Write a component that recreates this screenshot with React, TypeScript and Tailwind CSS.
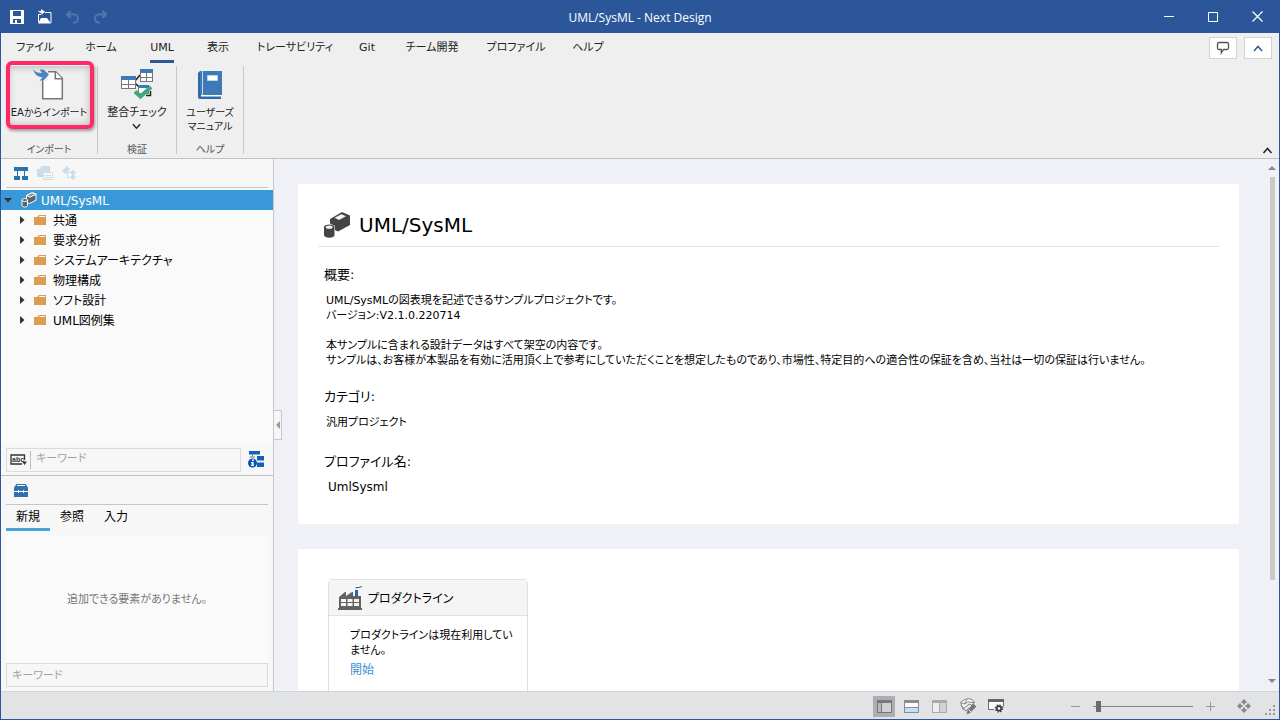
import { ReactNode, useState } from 'react';
import clsx from 'clsx';

const RIBBON_TABS = [
  { label: 'ファイル', width: 'w-[66px]' },
  { label: 'ホーム', width: 'w-[66px]' },
  { label: 'UML', width: 'w-[56px]' },
  { label: '表示', width: 'w-[56px]' },
  { label: 'トレーサビリティ', width: 'w-[98px]' },
  { label: 'Git', width: 'w-[46px]' },
  { label: 'チーム開発', width: 'w-[84px]' },
  { label: 'プロファイル', width: 'w-[84px]' },
  { label: 'ヘルプ', width: 'w-[60px]' },
];

const FOLDERS = ['共通', '要求分析', 'システムアーキテクチャ', '物理構成', 'ソフト設計', 'UML図例集'];

const PALETTE_TABS = ['新規', '参照', '入力'];

/* ---------- icons ---------- */

const SaveIcon = () => (
  <svg width="14" height="14" viewBox="0 0 14 14" shapeRendering="crispEdges">
    <path fill="#fff" fillRule="evenodd" d="M0 0H14V14H0ZM3 1V6H11V1ZM3 9V13H11V9Z" />
    <path fill="#fff" d="M5 10h2v3h-2z" />
  </svg>
);

const OpenIcon = () => (
  <svg width="15" height="15" viewBox="0 0 15 15">
    <path fill="none" stroke="#fff" d="M1.500 13V5.500H4M8 3.500h6V14" />
    <path fill="#fff" d="M1 14.500 4 9h6l4 5.500zM4 0l4 2.700L4.500 6V4C2.500 4 1.500 3 1 1.500 2 2.200 3 2.300 4 2z" />
  </svg>
);

const UndoIcon = ({ flip = false }: { flip?: boolean }) => (
  <svg width="15" height="14" viewBox="0 0 15 14" className={flip ? '-scale-x-100' : ''}>
    <path fill="none" stroke="#5176ae" strokeWidth="2" d="M5.500 1 2 4.500 5.500 8M2 4.500h7.500a3.500 4 0 0 1 0 8H8" />
  </svg>
);

const ImportIcon = () => (
  <svg width="32" height="32" viewBox="0 0 32 32">
    <path fill="#fff" stroke="#767676" strokeWidth="1.500" d="M9.700 3.700h13l6.600 6.600v20.500H9.700z" />
    <path fill="#fff" stroke="#767676" strokeWidth="1.500" d="M22.300 3.700v7h7" />
    <path fill="#ededed" d="M6 2h9v10.500H6z" />
    <path fill="#4b84bd" d="M0 1c2 3 5 4 9 4L6.500 1.500h4L16 6.500l-5.500 6H6.800l2.700-3.300C4.500 9 1.500 6.500 0 1z" />
  </svg>
);

const Grid = ({ x, y, w = 14 }: { x: number; y: number; w?: number }) => (
  <g>
    <rect x={x + 0.5} y={y + 0.5} width={w - 1} height="12" fill="#fff" stroke="#777" />
    <path stroke="#777" d={`M${x} ${y + 8.5}h${w}M${x + w / 2} ${y + 4}v9`} />
    <path fill="#3f79b5" d={`M${x} ${y}h${w}v4h-${w}z`} />
  </g>
);

const CheckIcon = () => (
  <svg width="34" height="32" viewBox="0 0 34 32">
    <path fill="none" stroke="#222" strokeWidth="1.500" d="m15 13 5-6M15 15l4 4M26 27.500h4.500V23" />
    <Grid x={1} y={8} w={15} />
    <Grid x={20} y={1} w={13} />
    <path fill="#fff" stroke="#777" d="M18.500 18.500h10v7h-10z" />
    <path fill="#3f79b5" d="M18 17h11v3H18z" />
    <path fill="none" stroke="#41a57d" strokeWidth="4" d="m15 23.500 5.500 5L31 19" />
  </svg>
);

const BookIcon = () => (
  <svg width="26" height="30" viewBox="0 0 26 30">
    <path fill="#3f7ab8" d="M3 1h22v24H3z" />
    <path fill="#3068a5" d="M1 3l2-2v24l-2 2z" />
    <path fill="#fff" d="M2 25h23v3H2z" />
    <path fill="#2f6ba9" d="M1 25h3v1.500h20V29H3a2 2 0 0 1-2-2z" />
    <path stroke="#c5dbf0" d="M5.500 1v24" />
    <path fill="#fff" stroke="#bed4ea" d="M10.500 5.500h10v5h-10z" />
  </svg>
);

const Chevron = ({ up = false, size = 9, color = '#222' }: { up?: boolean; size?: number; color?: string }) => (
  <svg width={size} height="7" viewBox="0 0 10 7" className={up ? 'rotate-180' : ''}>
    <path fill="none" stroke={color} strokeWidth="1.500" d="m1 1 4 4.500L9 1" />
  </svg>
);

const BubbleIcon = () => (
  <svg width="14" height="14" viewBox="0 0 14 14">
    <path fill="none" stroke="#555" strokeWidth="1.300" d="M3 1.500h8q1.500 0 1.500 1.500v4q0 1.500-1.500 1.500H7.500L5.300 12V8.500H3Q1.500 8.500 1.500 7V3Q1.500 1.500 3 1.500z" />
  </svg>
);

const HierarchyIcon = () => (
  <svg width="14" height="13" viewBox="0 0 14 13" fill="#2872ae" shapeRendering="crispEdges">
    <path d="M0 0h14v4H0zM0 9h6v4H0zM8 9h6v4H8zM3 4h1v5H3zM10 4h1v5h-1z" />
  </svg>
);

const ListFolderIcon = () => (
  <svg width="16" height="15" viewBox="0 0 16 15">
    <path fill="#cddce7" d="M0 3h3l1-3h9v6H6v5H0z" />
    <path fill="#f8f8f8" stroke="#cddce7" d="M6.500 6.500h9v7h-9z" />
    <path stroke="#cddce7" d="M8 9.500h6M8 11.500h6M5 1.500h7" />
  </svg>
);

const NodesIcon = () => (
  <svg width="15" height="14" viewBox="0 0 15 14">
    <path fill="#cddce7" d="m0 5 5-5 3 3-1.500 2.500L3 8zM11 3.500l3 3-3 3-3-3zM11 8l3 3-3 3-3-3z" />
    <path fill="none" stroke="#cddce7" d="M5.500 5v6.500h5M5 6.500h5" />
  </svg>
);

const ProjectIcon = () => (
  <svg width="28" height="28" viewBox="0 0 28 28">
    <path fill="#444" d="M7 8 19 1l8 3.500V14l-12 6.500-3-1.500v-4L7 12.500z" />
    <path fill="#f4f4f4" d="m11.500 6.800 7-3.600L23 5.300 16 9z" />
    <path fill="#444" d="M1 16c0-3.500 10.500-3.500 10.500 0v8c0 3.500-10.500 3.500-10.500 0z" />
    <ellipse cx="6.200" cy="16.200" rx="3.400" ry="1.600" fill="#f4f4f4" />
  </svg>
);

const ProjectTreeIcon = () => (
  <svg width="16" height="16" viewBox="0 0 16 16" stroke="#fff">
    <path fill="#56656f" d="M5.500 3.500 11 .700l4 1.500v6L8.500 11.500 5.500 10z" />
    <path fill="#8b979e" d="m5.500 3.500 5.500-2.800 4 1.500-6 3z" />
    <path fill="#56656f" d="M1 8c0-2 5.500-2 5.500 0v5.500c0 2-5.500 2-5.500 0z" />
    <path fill="none" d="M1 8.300c0 1.600 5.500 1.600 5.500 0" />
  </svg>
);

const FolderIcon = () => (
  <svg width="12" height="10" viewBox="0 0 12 10">
    <path fill="#dc9d52" d="M0 2h3l2-2h7v10H0z" />
    <path fill="#fafafa" d="M5.500 1H11v1H5z" />
  </svg>
);

const AbcIcon = () => (
  <svg width="17" height="12" viewBox="0 0 17 12">
    <path fill="none" stroke="#333" strokeWidth="1.300" d="M14.500 6V1H1v9h11" />
    <text x="2" y="7.500" fontSize="7" fontWeight="bold" fontFamily="Liberation Sans" fill="#333">abc</text>
    <path fill="#333" d="M12 7.500h5L14.500 11z" />
  </svg>
);

const TreeInfoIcon = () => (
  <svg width="17" height="17" viewBox="0 0 17 17">
    <path fill="#0f62b8" d="M1 0h11v3.500H1zM9 5h7v4.500H9zM9 11.500h7V16H9z" />
    <path fill="none" stroke="#777" d="M4.500 3.500v2M2 6h5" />
    <circle cx="4.500" cy="12" r="4.500" fill="#0753ad" />
    <path fill="#fff" d="M4 8.500h1.800V10H4zM3 11h2.600v3H6v1H3v-1h.7v-2H3z" />
  </svg>
);

const ToolboxIcon = () => (
  <svg width="14" height="13" viewBox="0 0 14 13">
    <path fill="#2d71ad" d="M2.500 0h9L14 3.500V13H0V3.500z" />
    <path fill="none" stroke="#fff" d="M3 1.500h8M0 7.500h14M4.500 6v3M9.500 6v3" />
  </svg>
);

const FactoryIcon = () => (
  <svg width="24" height="24" viewBox="0 0 24 24">
    <path fill="#626262" d="M0 22h1V11l6-5h1v4l6-4h1v4h8v12h1v2H0z" />
    <path fill="#f5f5f5" d="M3 13h5v3H3zM9.500 13h5v3h-5zM16 13h5v3h-5zM3 17h5v3H3zM9.500 17h5v3h-5zM16 17h5v3h-5z" />
    <path fill="#2366b4" d="M17 4h3v6h-3z" />
    <path fill="none" stroke="#555" d="M18 2.500V1.500h3L24 .5" />
  </svg>
);

const LeftPaneIcon = () => (
  <svg width="15" height="13" viewBox="0 0 15 13" shapeRendering="crispEdges">
    <path fill="#d0d1d4" stroke="#77787b" d="M.5.5h14v12H.5z" />
    <path fill="#77787b" d="M0 0h15v3H0zM4 3h1v10H4z" />
    <path fill="#b7b8bc" d="M1 3h3v9H1z" />
  </svg>
);

const BottomPaneIcon = () => (
  <svg width="15" height="13" viewBox="0 0 15 13" shapeRendering="crispEdges">
    <path fill="#fff" stroke="#8b8b8b" d="M.5.5h14v12H.5z" />
    <path fill="#8b8b8b" d="M0 0h15v3H0zM0 7h15v1H0z" />
    <path fill="#c4dff8" d="M1 8h13v4H1z" />
  </svg>
);

const SplitPaneIcon = () => (
  <svg width="15" height="13" viewBox="0 0 15 13" shapeRendering="crispEdges">
    <path fill="#eee" stroke="#a9aaac" d="M.5.5h14v12H.5z" />
    <path fill="#d2d3d5" d="M8 3h6v9H8z" />
    <path fill="#a9aaac" d="M0 0h15v3H0zM7 3h1v10H7z" />
  </svg>
);

const ModelEditIcon = () => (
  <svg width="17" height="17" viewBox="0 0 17 17">
    <path fill="#f5f5f5" stroke="#888" d="M.5 4.500 4 2l4-1.500 4 1 2.500 3-3 2.500-2.500-1L3 11z" />
    <path fill="none" stroke="#888" d="m.5 4.500 4 1.500 3.500-2 6.500.5M4.500 6 7 1.500M1 7.500l3 3M2 10l4 3 3-3" />
    <path fill="#777" d="m13 5.500 3.500 3-6.500 6.500-3.500 1.500 1-4z" />
    <path stroke="#e8e8e8" d="m8.500 11.500 2.500 2.500" />
  </svg>
);

const WindowGearIcon = () => (
  <svg width="16" height="14" viewBox="0 0 16 14">
    <path fill="#fff" stroke="#666" d="M.5.5h15v10H.5z" />
    <path fill="#666" d="M0 0h16v3H0z" />
    <circle cx="11" cy="9.500" r="5" fill="#eee" />
    <circle cx="11" cy="9.500" r="2.200" fill="none" stroke="#333" strokeWidth="1.500" />
    <circle cx="11" cy="9.500" r="3.400" fill="none" stroke="#333" strokeWidth="1.500" strokeDasharray="1.400 1.270" />
  </svg>
);

const FitIcon = () => (
  <svg width="14" height="14" viewBox="0 0 14 14" fill="#8a8a8a">
    <path d="M7 0l3 3-1 1H8v1.500H6V4H5L4 3zM7 14l-3-3 1-1h1V8.500h2V10h1l1 1zM0 7l3-3 1 1v1h1.500v2H4v1l-1 1zM14 7l-3 3-1-1V8H8.500V6H10V5l1-1z" />
  </svg>
);

const GripIcon = () => (
  <svg width="10" height="10" viewBox="0 0 10 10" fill="#999" shapeRendering="crispEdges">
    <path d="M8 0h2v2H8zM4 4h2v2H4zM8 4h2v2H8zM0 8h2v2H0zM4 8h2v2H4zM8 8h2v2H8z" />
  </svg>
);

/* ---------- building blocks ---------- */

const RibbonGroup = ({ title, className, children }: { title: string; className: string; children: ReactNode }) => (
  <section className={clsx('flex h-[88px] flex-col items-center justify-between border-r border-[#c6c6c9]', className)}>
    {children}
    <span className="text-[10px] leading-2 text-[#555]">{title}</span>
  </section>
);

const Field = ({ title, className, children }: { title: string; className: string; children: ReactNode }) => (
  <div className={className}>
    <h2 className="text-[13px] leading-5">{title}</h2>
    <div className="mt-2 pl-[2px] text-[11px] leading-[15px]">{children}</div>
  </div>
);

const TitleBar = () => (
  <header className="flex h-[33px] shrink-0 items-center bg-[#2b579a] text-white">
    <div className="flex-1">
      <div className="flex items-center gap-[13px] pl-[9px]">
        <button type="button" aria-label="保存"><SaveIcon /></button>
        <button type="button" aria-label="開く"><OpenIcon /></button>
        <button type="button" aria-label="元に戻す" disabled><UndoIcon /></button>
        <button type="button" aria-label="やり直し" disabled><UndoIcon flip /></button>
      </div>
    </div>
    <h1 className="pt-[2px] font-['Open_Sans','Noto_Sans_CJK_JP',sans-serif] text-xs">UML/SysML - Next Design</h1>
    <div className="flex flex-1 justify-end">
      <button type="button" aria-label="最小化" className="flex h-8 w-11 items-center justify-center">
        <svg width="10" height="1"><path fill="#fff" d="M0 0h10v1H0z" /></svg>
      </button>
      <button type="button" aria-label="最大化" className="flex h-8 w-11 items-center justify-center">
        <svg width="10" height="10"><path fill="none" stroke="#fff" d="M.5.5h9v9h-9z" /></svg>
      </button>
      <button type="button" aria-label="閉じる" className="flex h-8 w-11 items-center justify-center">
        <svg width="11" height="11"><path stroke="#fff" strokeWidth="1.200" d="m.5.5 10 10M10.500.5l-10 10" /></svg>
      </button>
    </div>
  </header>
);

const Ribbon = () => {
  const [active, setActive] = useState('UML');

  return (
    <div className="shrink-0 border-b border-[#bfc0c4] bg-[#efefef] text-[#222]">
      <div className="flex items-center justify-between pr-[7px]">
        <nav className="flex pl-px">
          {RIBBON_TABS.map(({ label, width }) => (
            <button
              key={label}
              type="button"
              onClick={() => setActive(label)}
              className={clsx('flex h-[30px] justify-center text-[11px] whitespace-nowrap', width)}
            >
              <span className={clsx('h-full border-b-[3px] leading-[30px]', active === label ? 'border-[#2b579a]' : 'border-transparent')}>
                {label}
              </span>
            </button>
          ))}
        </nav>
        <div className="flex gap-[7px]">
          <button type="button" aria-label="フィードバック" className="flex h-[22px] w-7 items-center justify-center border border-[#d2d3d7] bg-white">
            <BubbleIcon />
          </button>
          <button type="button" aria-label="上へ" className="flex h-[22px] w-7 items-center justify-center border border-[#d2d3d7] bg-white">
            <Chevron up size={10} color="#2b579a" />
          </button>
        </div>
      </div>

      <div className="flex items-end justify-between pt-[3px] pb-1">
        <div className="flex">
          <RibbonGroup title="インポート" className="w-[97px]">
            <div className="relative">
              <button type="button" className="flex h-[60px] w-[84px] flex-col items-center whitespace-nowrap shadow-[inset_0_0_9px_rgba(0,0,0,0.3)]">
                <span className="mt-[2px]"><ImportIcon /></span>
                <span className="mt-[5px] text-[10px] leading-4">EAからインポート</span>
              </button>
              <span className="pointer-events-none absolute -top-[5px] -right-[3px] -left-px h-[68px] rounded-md border-4 border-[#ff2968] shadow-[1px_2px_3px_rgba(0,0,0,0.35)]" />
            </div>
          </RibbonGroup>
          <RibbonGroup title="検証" className="w-[79px]">
            <button type="button" className="flex flex-col items-center pt-[2px] whitespace-nowrap">
              <CheckIcon />
              <span className="mt-[5px] text-[11px] leading-4">整合チェック</span>
              <span className="mt-[2px]"><Chevron /></span>
            </button>
          </RibbonGroup>
          <RibbonGroup title="ヘルプ" className="w-[67px]">
            <button type="button" className="flex flex-col items-center pt-[2px] whitespace-nowrap">
              <span className="flex h-8 items-end"><BookIcon /></span>
              <span className="mt-[6px] text-[10px] leading-[14px]">ユーザーズ<br />マニュアル</span>
            </button>
          </RibbonGroup>
        </div>
        <button type="button" aria-label="リボンを折りたたむ" className="pr-[6px]">
          <Chevron up size={11} />
        </button>
      </div>
    </div>
  );
};

const Sidebar = () => {
  const [tab, setTab] = useState('新規');

  return (
    <aside className="flex w-[273px] shrink-0 flex-col border-r border-[#c8c8c8] bg-[#f7f7f7]">
      <div className="mx-[5px] flex h-[29px] items-center gap-[9px] border-b border-[#c6c6c6] pl-2">
        <button type="button" aria-label="構造"><HierarchyIcon /></button>
        <button type="button" aria-label="一覧" disabled><ListFolderIcon /></button>
        <button type="button" aria-label="関連" disabled><NodesIcon /></button>
      </div>

      <ul className="min-h-0 flex-1 bg-[#fafafa] pt-[2px]">
        <li>
          <button type="button" className="flex h-5 w-full items-center bg-[#3999d8] pl-[3px] text-white">
            <svg width="8" height="5"><path fill="#333" d="M0 0h8L4 4.500z" /></svg>
            <span className="mr-1 ml-[9px]"><ProjectTreeIcon /></span>
            <span className="pt-[2px]">UML/SysML</span>
          </button>
          <ul>
            {FOLDERS.map((name) => (
              <li key={name}>
                <button type="button" className="flex h-5 w-full items-center pl-[19px] whitespace-nowrap">
                  <svg width="5" height="8"><path fill="#333" d="M0 0v8l4.500-4z" /></svg>
                  <span className="mr-[7px] ml-[9px]"><FolderIcon /></span>
                  <span className="pt-[2px]">{name}</span>
                </button>
              </li>
            ))}
          </ul>
        </li>
      </ul>

      <div className="flex h-8 items-center border-b border-[#c0c0c0] pr-2 pl-[5px]">
        <div className="flex h-6 flex-1 items-center border border-[#dadcdc]">
          <button type="button" aria-label="検索条件" className="flex h-[18px] w-6 items-center justify-center border-r border-[#b8bec4]">
            <AbcIcon />
          </button>
          <input aria-label="モデル検索" placeholder="キーワード" className="w-0 flex-1 bg-transparent pl-[5px] text-[11px] outline-none placeholder:text-[#a3a3a3]" />
        </div>
        <button type="button" aria-label="詳細" className="ml-[7px]"><TreeInfoIcon /></button>
      </div>

      <div className="flex h-[215px] flex-col px-[5px]">
        <div className="flex h-[29px] items-center border-b border-[#c6c6c6] pl-2">
          <button type="button" aria-label="ツールボックス"><ToolboxIcon /></button>
        </div>
        <div className="flex">
          {PALETTE_TABS.map((name) => (
            <button
              key={name}
              type="button"
              onClick={() => setTab(name)}
              className={clsx('h-[26px] w-11 border-b-[3px]', tab === name ? 'border-[#46a2da]' : 'border-transparent')}
            >
              {name}
            </button>
          ))}
        </div>
        <p className="mt-1 flex flex-1 items-center justify-center bg-[#fafafa] pt-[2px] text-[11px] text-[#777]">追加できる要素がありません。</p>
        <input aria-label="要素検索" placeholder="キーワード" className="mb-1 h-6 border border-[#dadcdc] bg-transparent px-[5px] text-[11px] outline-none placeholder:text-[#a3a3a3]" />
      </div>
    </aside>
  );
};

const ProjectView = () => (
  <main className="relative flex min-w-0 flex-1 bg-[#f0f1f6]">
    <button type="button" aria-label="サイドバーを閉じる" className="absolute top-[251px] -left-px flex h-[30px] w-[9px] items-center justify-center border border-[#c8c8c8] bg-[#f7f7f7]">
      <svg width="4" height="8"><path fill="#999" d="M4 0v8L0 4z" /></svg>
    </button>

    <div className="min-w-0 flex-1 overflow-hidden pt-[25px] pr-7 pl-6">
      <article className="h-[340px] rounded-xs bg-white px-5 pt-5">
        <div className="flex h-[43px] items-center gap-2 border-b border-[#e4e4e4] pl-[5px]">
          <ProjectIcon />
          <h1 className="text-xl">UML/SysML</h1>
        </div>
        <div className="pl-[6px]">
          <Field title="概要:" className="mt-[18px]">
            <p>
              UML/SysMLの図表現を記述できるサンプルプロジェクトです。<br />
              バージョン:V2.1.0.220714
            </p>
            <p className="mt-[15px] whitespace-nowrap">
              本サンプルに含まれる設計データはすべて架空の内容です。<br />
              サンプルは、お客様が本製品を有効に活用頂く上で参考にしていただくことを想定したものであり、市場性、特定目的への適合性の保証を含め、当社は一切の保証は行いません。
            </p>
          </Field>
          <Field title="カテゴリ:" className="mt-[19px]">汎用プロジェクト</Field>
          <Field title="プロファイル名:" className="mt-[22px]">
            <span className="pl-[2px] text-xs leading-[15px]">UmlSysml</span>
          </Field>
        </div>
      </article>

      <article className="mt-[25px] h-[340px] rounded-xs bg-white p-[30px]">
        <section className="h-[200px] w-[200px] rounded-sm border border-[#e0e0e0]">
          <div className="flex h-9 items-center gap-[6px] border-b border-[#e0e0e0] bg-[#f5f5f5] pl-[9px]">
            <FactoryIcon />
            <h2 className="pt-[2px] text-xs">プロダクトライン</h2>
          </div>
          <div className="pt-3 pl-[21px] leading-[15px]">
            <p className="text-[11px]">プロダクトラインは現在利用してい<br />ません。</p>
            <a href="#start" className="mt-[5px] block text-[#3a8fd0]">開始</a>
          </div>
        </section>
      </article>
    </div>

    <div className="mr-[2px] flex w-[10px] flex-col items-center pt-[7px] pb-2">
      <svg width="8" height="4"><path fill="#888" d="M0 4h8L4 0z" /></svg>
      <div className="mt-[7px] h-[403px] w-[5px] bg-[#c9c9c9]" />
      <svg width="8" height="4" className="mt-auto"><path fill="#888" d="M0 0h8L4 4z" /></svg>
    </div>
  </main>
);

const StatusBar = () => (
  <footer className="flex h-7 shrink-0 items-center justify-end border-t border-[#d2d3d5] bg-[#e2e3e5] pt-px pr-1">
    <div className="flex items-center gap-[13px]">
      <button type="button" aria-label="左ペイン" aria-pressed="true" className="-mr-1 flex h-[21px] w-[22px] items-center justify-center bg-[#adaeb4]"><LeftPaneIcon /></button>
      <button type="button" aria-label="下ペイン"><BottomPaneIcon /></button>
      <button type="button" aria-label="分割"><SplitPaneIcon /></button>
      <button type="button" aria-label="モデル編集"><ModelEditIcon /></button>
      <button type="button" aria-label="画面設定" className="-ml-[2px]"><WindowGearIcon /></button>
    </div>
    <button type="button" aria-label="縮小" className="ml-[67px]">
      <svg width="9" height="9"><path fill="#999" d="M0 4h9v1H0z" /></svg>
    </button>
    <input
      type="range"
      aria-label="ズーム"
      defaultValue={3}
      className="mx-[13px] h-px w-[100px] appearance-none bg-[#808080] [&::-webkit-slider-thumb]:h-[11px] [&::-webkit-slider-thumb]:w-[5px] [&::-webkit-slider-thumb]:appearance-none [&::-webkit-slider-thumb]:bg-[#6b6b6b]"
    />
    <button type="button" aria-label="拡大">
      <svg width="9" height="9"><path fill="#999" d="M0 4h9v1H0zM4 0h1v9H4z" /></svg>
    </button>
    <button type="button" aria-label="全体表示" className="ml-[22px]"><FitIcon /></button>
    <span className="ml-[14px] self-end pb-1"><GripIcon /></span>
  </footer>
);

const App = () => (
  <div className="flex h-screen flex-col overflow-hidden border-x border-b border-[#2b579a] bg-[#f0f1f6] font-['DejaVu_Sans','Noto_Sans_CJK_JP',sans-serif] text-xs text-black [font-feature-settings:'palt']">
    <TitleBar />
    <Ribbon />
    <div className="flex min-h-0 flex-1">
      <Sidebar />
      <ProjectView />
    </div>
    <StatusBar />
  </div>
);

export default App;
